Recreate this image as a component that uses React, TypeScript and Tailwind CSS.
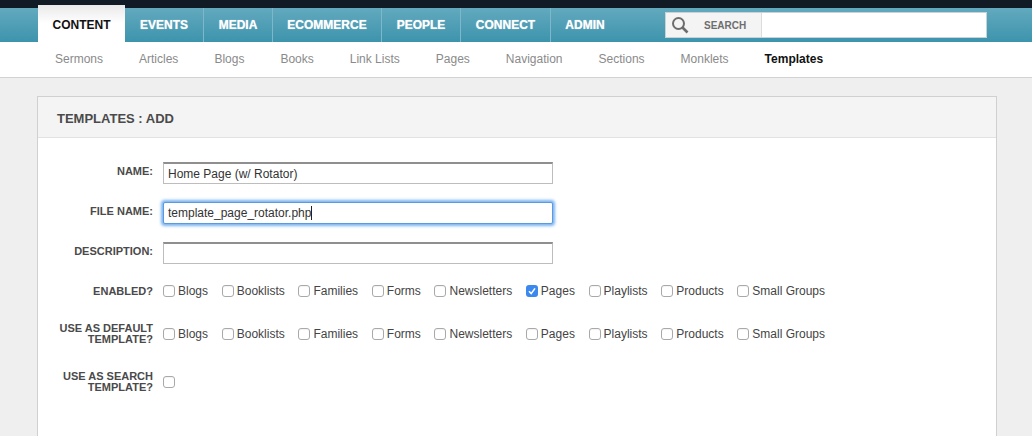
const mainNav = [
  { label: "EVENTS", width: "w-[79px]" },
  { label: "MEDIA", width: "w-[69px]" },
  { label: "ECOMMERCE", width: "w-[109px]" },
  { label: "PEOPLE", width: "w-[79px]" },
  { label: "CONNECT", width: "w-[90px]" },
];

const subNav = ["Sermons", "Articles", "Blogs", "Books", "Link Lists", "Pages", "Navigation", "Sections", "Monklets"];

const types = ["Blogs", "Booklists", "Families", "Forms", "Newsletters", "Pages", "Playlists", "Products", "Small Groups"];

function Box({ checked = false }: { checked?: boolean }) {
  if (checked) {
    return (
      <span className="flex h-[12px] w-[12px] shrink-0 items-center justify-center rounded-[3px] bg-[#3b88ee]">
        <svg viewBox="0 0 12 12" className="h-[12px] w-[12px]">
          <path d="M3 6.2 L5.2 8.6 L9 3.4" fill="none" stroke="#fff" strokeWidth="1.6" />
        </svg>
      </span>
    );
  }
  return <span className="h-[12px] w-[12px] shrink-0 rounded-[3px] border border-[#a9a9a9] bg-white shadow-[inset_0_1px_1px_rgba(0,0,0,0.05)]" />;
}

function Label({ children }: { children: React.ReactNode }) {
  return (
    <div className="w-[115px] shrink-0 text-right text-[11px] font-bold leading-[11px] text-[#4a4a4a]">{children}</div>
  );
}

function Field({ label, value }: { label: string; value: string }) {
  return (
    <div className="flex h-[22px] items-center gap-[10px]">
      <div className="pb-[4px]">
        <Label>{label}</Label>
      </div>
      <div className="flex h-[22px] w-[390px] items-center border border-[#bdbdbd] border-t-2 border-t-[#8f8f8f] bg-white pl-[4px] text-[12px] text-[#333]">
        {value}
      </div>
    </div>
  );
}

function Checks({ label, checked }: { label: React.ReactNode; checked?: string }) {
  return (
    <div className="flex items-center gap-[10px]">
      <Label>{label}</Label>
      <div className="flex items-center gap-[13.7px]">
        {types.map((t) => (
          <div key={t} className="flex items-center gap-[3px] text-[12px] text-[#444]">
            <Box checked={t === checked} />
            <span>{t}</span>
          </div>
        ))}
      </div>
    </div>
  );
}

export default function App() {
  return (
    <div className="flex h-[436px] w-[1032px] flex-col overflow-hidden bg-[#efefef] font-['Liberation_Sans',Arial,sans-serif]">
      <div className="h-[8px] shrink-0 bg-[#111b25]" />
      <div className="flex h-[34px] shrink-0 items-stretch bg-gradient-to-b from-[#62a9be] to-[#3c94ad] pl-[38px]">
        <div className="-mt-[3px] flex w-[87px] items-center justify-center bg-gradient-to-b from-[#e9e9e9] via-white to-white pt-[3px] text-[12px] font-bold text-[#111]">
          CONTENT
        </div>
        {mainNav.map((item) => (
          <div
            key={item.label}
            className={`${item.width} flex items-center justify-center border-r border-[#7db7c9] text-[12px] font-bold text-white [text-shadow:0_0_1px_rgba(255,255,255,0.7)]`}
          >
            {item.label}
          </div>
        ))}
        <div className="flex w-[68px] items-center justify-center text-[12px] font-bold text-white [text-shadow:0_0_1px_rgba(255,255,255,0.7)]">
          ADMIN
        </div>
        <div className="ml-[46px] mt-[4px] flex h-[26px] w-[322px] border border-[#c9d3d6] bg-white">
          <div className="flex w-[96px] items-center border-r border-[#dcdcdc] bg-[#f4f4f4] pl-[5px]">
            <svg viewBox="0 0 18 18" className="h-[18px] w-[18px]">
              <circle cx="7.5" cy="7.5" r="5.5" fill="none" stroke="#6d6d6d" strokeWidth="2" />
              <path d="M11.5 11.5 L16.5 16.5" stroke="#6d6d6d" strokeWidth="2.6" />
            </svg>
            <span className="ml-[15px] text-[10px] font-bold text-[#6e6e6e]">SEARCH</span>
          </div>
        </div>
      </div>
      <div className="flex h-[36px] shrink-0 items-center gap-[36px] border-b border-[#d2d2d2] bg-white pb-[1px] pl-[55px] text-[12px] text-[#8a8a8a]">
        {subNav.map((s) => (
          <span key={s}>{s}</span>
        ))}
        <span className="font-bold text-[#111]">Templates</span>
      </div>
      <div className="ml-[37px] mt-[18px] h-[400px] w-[960px] shrink-0 border border-[#d0d0d0] bg-white">
        <div className="flex h-[41px] items-center border-b border-[#e2e2e2] bg-[#f4f4f4] pl-[19px] pt-[3px] text-[13px] font-bold text-[#4a4a4a]">
          TEMPLATES : ADD
        </div>
        <div className="flex flex-col pt-[24px]">
          <Field label="NAME:" value="Home Page (w/ Rotator)" />
          <div className="mt-[18px] flex h-[22px] items-center gap-[10px]">
            <div className="pb-[4px]">
              <Label>FILE NAME:</Label>
            </div>
            <div className="flex h-[22px] w-[390px] items-center rounded-[2px] border border-[#5a9ae0] bg-white pl-[4px] text-[12px] text-[#333] shadow-[0_0_3px_2px_rgba(90,160,235,0.8)]">
              template_page_rotator.php
              <span className="h-[14px] w-px bg-[#222]" />
            </div>
          </div>
          <div className="mt-[18px]">
            <Field label="DESCRIPTION:" value="" />
          </div>
          <div className="mt-[18px]">
            <Checks label="ENABLED?" checked="Pages" />
          </div>
          <div className="mt-[23px]">
            <Checks
              label={
                <>
                  USE AS DEFAULT
                  <br />
                  TEMPLATE?
                </>
              }
            />
          </div>
          <div className="mt-[26px] flex items-center gap-[10px]">
            <Label>
              USE AS SEARCH
              <br />
              TEMPLATE?
            </Label>
            <Box />
          </div>
        </div>
      </div>
    </div>
  );
}
